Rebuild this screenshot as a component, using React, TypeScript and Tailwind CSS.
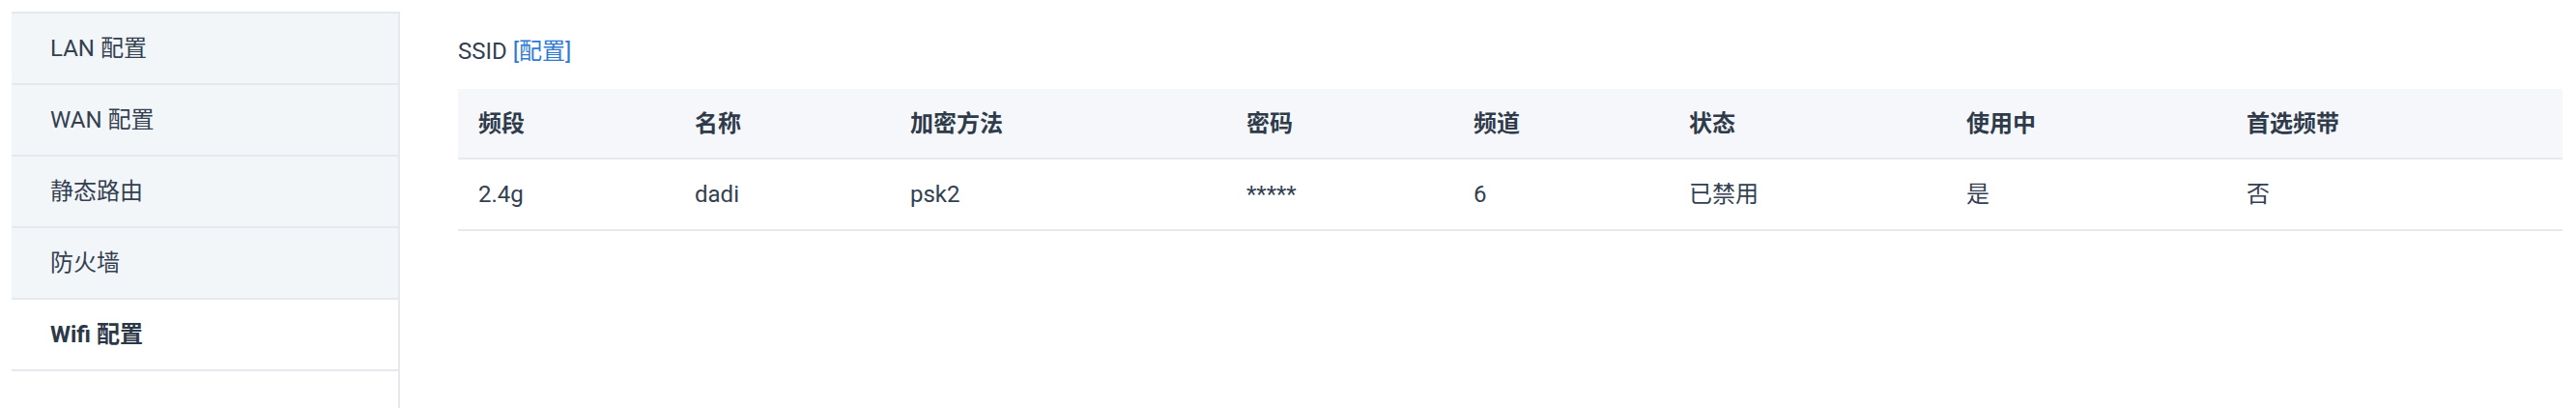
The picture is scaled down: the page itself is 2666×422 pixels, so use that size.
import React from "react";

const menu = [
  { label: "LAN 配置", active: false },
  { label: "WAN 配置", active: false },
  { label: "静态路由", active: false },
  { label: "防火墙", active: false },
  { label: "Wifi 配置", active: true },
];

const headers = ["频段", "名称", "加密方法", "密码", "频道", "状态", "使用中", "首选频带"];
const row = ["2.4g", "dadi", "psk2", "*****", "6", "已禁用", "是", "否"];

export default function App() {
  return (
    <div className="flex min-h-screen bg-white pl-3 pt-3 font-['Roboto','Noto_Sans_CJK_SC',sans-serif] text-[24px] text-[#334051]">
      <aside className="flex w-[402px] shrink-0 flex-col border-t-2 border-r-2 border-[#e5e9ee]">
        {menu.map((m) => (
          <div
            key={m.label}
            className={
              m.active
                ? "flex h-[74px] items-center border-b-2 border-[#e5e9ee] bg-white pl-10 font-bold text-[#2c3848]"
                : "flex h-[74px] items-center border-b-2 border-[#e5e9ee] bg-[#f3f6f9] pl-10"
            }
          >
            {m.label}
          </div>
        ))}
      </aside>
      <main className="flex-1 pl-[60px] pr-[14px] pt-[23px]">
        <div className="leading-[36px]">
          SSID <a className="cursor-pointer text-[#2f7ad6]">[配置]</a>
        </div>
        <div className="mt-[21px]">
          <div className="grid h-[73px] grid-cols-[224px_223px_348px_235px_223px_287px_290px_1fr] items-center border-b-2 border-[#e6eaee] bg-[#f5f7fa] font-semibold text-[#2f3b4b]">
            {headers.map((h) => (
              <div key={h} className="pl-[21px]">
                {h}
              </div>
            ))}
          </div>
          <div className="grid h-[74px] grid-cols-[224px_223px_348px_235px_223px_287px_290px_1fr] items-center border-b-2 border-[#e6eaee]">
            {row.map((c, i) => (
              <div key={i} className="pl-[21px]">
                {c}
              </div>
            ))}
          </div>
        </div>
      </main>
    </div>
  );
}
